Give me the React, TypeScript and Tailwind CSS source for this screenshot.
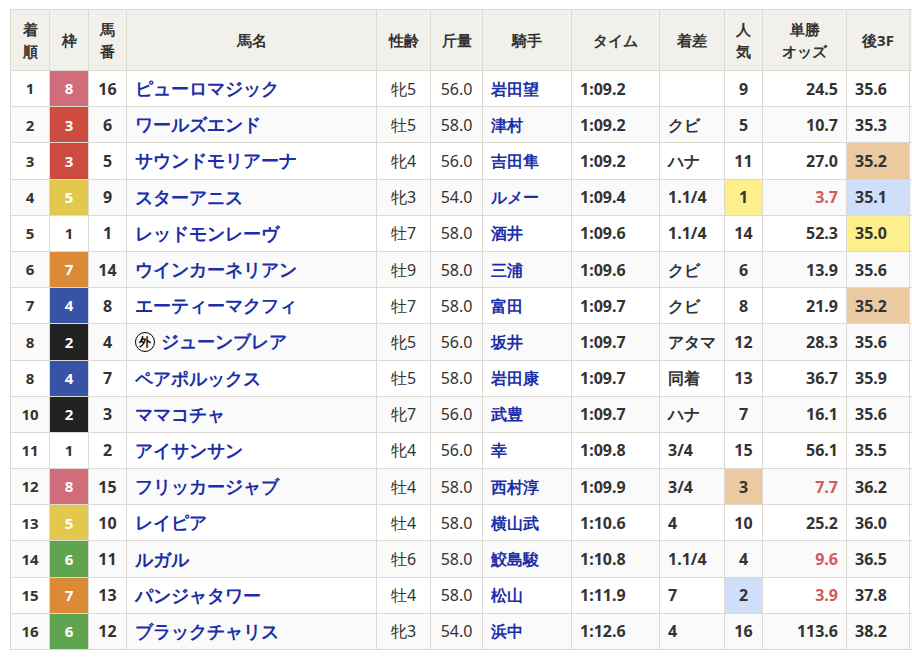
const FRAME: Record<number, string> = {
  1: "bg-white text-[#333]",
  2: "bg-[#222222] text-white",
  3: "bg-[#cd4b3f] text-white",
  4: "bg-[#3753a5] text-white",
  5: "bg-[#e2c94e] text-white",
  6: "bg-[#5fa54f] text-white",
  7: "bg-[#db8a35] text-white",
  8: "bg-[#d16c7b] text-white",
};

type Row = [string, number, number, string, string, string, string, string, string, number, string, string, string?, string?, string?];

// 着順, 枠, 馬番, 馬名, 性齢, 斤量, 騎手, タイム, 着差, 人気, オッズ, 後3F, 人気hl, 後3Fhl, オッズ色
const rows: Row[] = [
  ["1", 8, 16, "ピューロマジック", "牝5", "56.0", "岩田望", "1:09.2", "", 9, "24.5", "35.6"],
  ["2", 3, 6, "ワールズエンド", "牡5", "58.0", "津村", "1:09.2", "クビ", 5, "10.7", "35.3"],
  ["3", 3, 5, "サウンドモリアーナ", "牝4", "56.0", "吉田隼", "1:09.2", "ハナ", 11, "27.0", "35.2", "", "tan"],
  ["4", 5, 9, "スターアニス", "牝3", "54.0", "ルメー", "1:09.4", "1.1/4", 1, "3.7", "35.1", "yellow", "blue", "red"],
  ["5", 1, 1, "レッドモンレーヴ", "牡7", "58.0", "酒井", "1:09.6", "1.1/4", 14, "52.3", "35.0", "", "yellow"],
  ["6", 7, 14, "ウインカーネリアン", "牡9", "58.0", "三浦", "1:09.6", "クビ", 6, "13.9", "35.6"],
  ["7", 4, 8, "エーティーマクフィ", "牡7", "58.0", "富田", "1:09.7", "クビ", 8, "21.9", "35.2", "", "tan"],
  ["8", 2, 4, "ジューンブレア", "牝5", "56.0", "坂井", "1:09.7", "アタマ", 12, "28.3", "35.6"],
  ["8", 4, 7, "ペアポルックス", "牡5", "58.0", "岩田康", "1:09.7", "同着", 13, "36.7", "35.9"],
  ["10", 2, 3, "ママコチャ", "牝7", "56.0", "武豊", "1:09.7", "ハナ", 7, "16.1", "35.6"],
  ["11", 1, 2, "アイサンサン", "牝4", "56.0", "幸", "1:09.8", "3/4", 15, "56.1", "35.5"],
  ["12", 8, 15, "フリッカージャブ", "牡4", "58.0", "西村淳", "1:09.9", "3/4", 3, "7.7", "36.2", "tan", "", "red"],
  ["13", 5, 10, "レイピア", "牡4", "58.0", "横山武", "1:10.6", "4", 10, "25.2", "36.0"],
  ["14", 6, 11, "ルガル", "牡6", "58.0", "鮫島駿", "1:10.8", "1.1/4", 4, "9.6", "36.5", "", "", "red"],
  ["15", 7, 13, "パンジャタワー", "牡4", "58.0", "松山", "1:11.9", "7", 2, "3.9", "37.8", "blue", "", "red"],
  ["16", 6, 12, "ブラックチャリス", "牝3", "54.0", "浜中", "1:12.6", "4", 16, "113.6", "38.2"],
];

const HL: Record<string, string> = {
  "": "",
  tan: "bg-[#ebc9a1]",
  blue: "bg-[#cfdff9]",
  yellow: "bg-[#fdf08c]",
};

const th = "border border-[#dcd9d0] bg-[#f2f0eb] font-bold text-[#333] text-center leading-[22px]";
const td = "border border-[#dcd9d0] h-[36.2px] px-1";

export default function App() {
  return (
    <div className="w-[912px] h-[658px] overflow-hidden bg-white pl-[10px] pt-[9px] font-['Noto_Sans_CJK_JP',sans-serif] text-[16px] text-[#333]">
      <table className="table-fixed border-collapse w-[960px]">
        <colgroup>
          <col className="w-[39px]" />
          <col className="w-[39px]" />
          <col className="w-[38px]" />
          <col className="w-[250px]" />
          <col className="w-[54px]" />
          <col className="w-[52px]" />
          <col className="w-[89px]" />
          <col className="w-[88px]" />
          <col className="w-[65px]" />
          <col className="w-[38px]" />
          <col className="w-[84px]" />
          <col className="w-[63px]" />
          <col className="w-[61px]" />
        </colgroup>
        <thead>
          <tr className="h-[61px] text-[15px]">
            <th className={th}>着<br />順</th>
            <th className={th}>枠</th>
            <th className={th}>馬<br />番</th>
            <th className={th}>馬名</th>
            <th className={th}>性齢</th>
            <th className={th}>斤量</th>
            <th className={th}>騎手</th>
            <th className={th}>タイム</th>
            <th className={th}>着差</th>
            <th className={th}>人<br />気</th>
            <th className={th}>単勝<br />オッズ</th>
            <th className={th}>後3F</th>
            <th className={th}></th>
          </tr>
        </thead>
        <tbody>
          {rows.map((r, i) => (
            <tr key={i} className={i % 2 === 0 ? "bg-white" : "bg-[#fafafa]"}>
              <td className={`${td} text-center font-bold text-[15px]`}>{r[0]}</td>
              <td className={`${td} text-center font-bold text-[15px] ${FRAME[r[1]]}`}>{r[1]}</td>
              <td className={`${td} text-center font-bold`}>{r[2]}</td>
              <td className={`${td} pl-2 text-[18px] font-bold text-[#1a2fa8]`}>
                <span className="flex items-center gap-1.5">
                  {r[3] === "ジューンブレア" && (
                    <span className="inline-flex w-[20px] h-[20px] rounded-full border-[1.5px] border-black items-center justify-center text-[12px] text-black font-bold">外</span>
                  )}
                  {r[3]}
                </span>
              </td>
              <td className={`${td} text-center`}>{r[4]}</td>
              <td className={`${td} text-center`}>{r[5]}</td>
              <td className={`${td} pl-2 font-bold text-[#1a2fa8]`}>{r[6]}</td>
              <td className={`${td} pl-2 font-bold`}>{r[7]}</td>
              <td className={`${td} pl-2 font-bold`}>{r[8]}</td>
              <td className={`${td} text-center font-bold ${HL[r[12] ?? ""]}`}>{r[9]}</td>
              <td className={`${td} text-right pr-2 font-bold ${r[14] === "red" ? "text-[#d4595a]" : ""}`}>{r[10]}</td>
              <td className={`${td} pl-2 font-bold ${HL[r[13] ?? ""]}`}>{r[11]}</td>
              <td className={td}></td>
            </tr>
          ))}
        </tbody>
      </table>
    </div>
  );
}
